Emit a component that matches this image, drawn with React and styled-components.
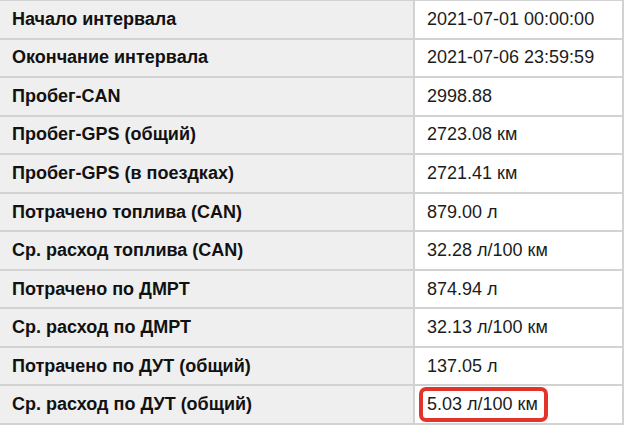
import React from 'react';
import styled, { createGlobalStyle } from 'styled-components';

const GlobalStyle = createGlobalStyle`
  html, body {
    margin: 0;
    padding: 0;
    background: #ffffff;
  }
  body {
    font-family: "Liberation Sans", Arial, sans-serif;
  }
`;

const rows = [
  ['Начало интервала', '2021-07-01 00:00:00'],
  ['Окончание интервала', '2021-07-06 23:59:59'],
  ['Пробег-CAN', '2998.88'],
  ['Пробег-GPS (общий)', '2723.08 км'],
  ['Пробег-GPS (в поездках)', '2721.41 км'],
  ['Потрачено топлива (CAN)', '879.00 л'],
  ['Ср. расход топлива (CAN)', '32.28 л/100 км'],
  ['Потрачено по ДМРТ', '874.94 л'],
  ['Ср. расход по ДМРТ', '32.13 л/100 км'],
  ['Потрачено по ДУТ (общий)', '137.05 л'],
  ['Ср. расход по ДУТ (общий)', '5.03 л/100 км', true],
];

export default function App() {
  return (
    <>
      <GlobalStyle />
      <Table>
        {rows.map(([label, value, marked]) => (
          <Row key={label}>
            <Label>{label}</Label>
            <Value>{marked ? <Marked>{value}</Marked> : value}</Value>
          </Row>
        ))}
      </Table>
    </>
  );
}

const Table = styled.div`
  width: 624px;
  box-sizing: border-box;
  border-top: 1px solid #d2d2d2;
  border-right: 2px solid #d2d2d2;
  display: flex;
  flex-direction: column;
`;

const Row = styled.div`
  display: grid;
  grid-template-columns: 415px 1fr;
  height: 38.55px;
  box-sizing: border-box;
  border-bottom: 2px solid #d2d2d2;
`;

const Label = styled.div`
  display: flex;
  align-items: center;
  box-sizing: border-box;
  padding-left: 12px;
  background: #efefef;
  border-right: 2px solid #d2d2d2;
  font-size: 18px;
  font-weight: bold;
  color: #111111;
  white-space: nowrap;
`;

const Value = styled.div`
  display: flex;
  align-items: center;
  padding-left: 12px;
  background: #ffffff;
  font-size: 18px;
  color: #1c1c1c;
  white-space: nowrap;
`;

const Marked = styled.span`
  display: inline-block;
  margin-left: -8px;
  padding: 3px 6px 3px 4px;
  line-height: 21px;
  border: 4px solid #e3342c;
  border-radius: 7px;
`;
